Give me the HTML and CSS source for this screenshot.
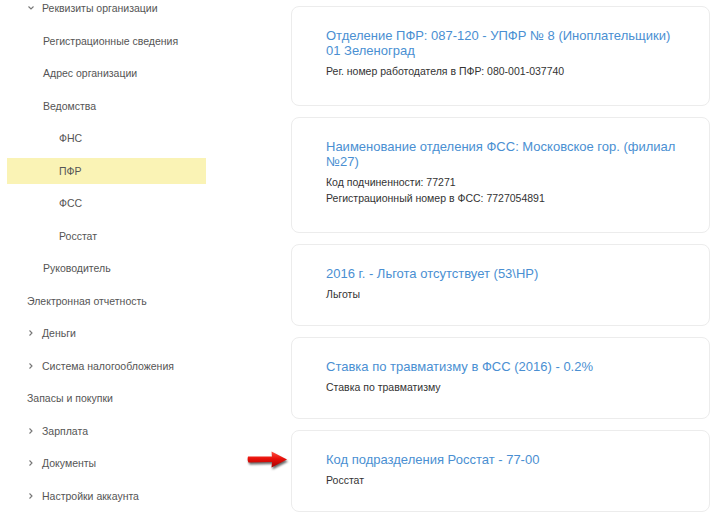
FILE: index.html
```html
<!DOCTYPE html>
<html lang="ru">
<head>
    <meta charset="UTF-8">
    <title>Реквизиты организации</title>
    <link rel="stylesheet" href="styles.css">
</head>
<body>
    <div class="page">
        <ul class="nav">
            <li class="nav-item lvl-0 has-toggle"><span class="toggle"><svg width="8" height="6" viewBox="0 0 8 6"><path d="M1.5 1.5 L4 4 L6.5 1.5" fill="none" stroke="#777" stroke-width="1.1"/></svg></span>Реквизиты организации</li>
            <li class="nav-item lvl-1">Регистрационные сведения</li>
            <li class="nav-item lvl-1">Адрес организации</li>
            <li class="nav-item lvl-1">Ведомства</li>
            <li class="nav-item lvl-2">ФНС</li>
            <li class="nav-item lvl-2 active">ПФР</li>
            <li class="nav-item lvl-2">ФСС</li>
            <li class="nav-item lvl-2">Росстат</li>
            <li class="nav-item lvl-1">Руководитель</li>
            <li class="nav-item lvl-0">Электронная отчетность</li>
            <li class="nav-item lvl-0 has-toggle"><span class="toggle"><svg width="8" height="8" viewBox="0 0 8 8"><path d="M2.5 1.5 L5 4 L2.5 6.5" fill="none" stroke="#777" stroke-width="1.1"/></svg></span>Деньги</li>
            <li class="nav-item lvl-0 has-toggle"><span class="toggle"><svg width="8" height="8" viewBox="0 0 8 8"><path d="M2.5 1.5 L5 4 L2.5 6.5" fill="none" stroke="#777" stroke-width="1.1"/></svg></span>Система налогообложения</li>
            <li class="nav-item lvl-0">Запасы и покупки</li>
            <li class="nav-item lvl-0 has-toggle"><span class="toggle"><svg width="8" height="8" viewBox="0 0 8 8"><path d="M2.5 1.5 L5 4 L2.5 6.5" fill="none" stroke="#777" stroke-width="1.1"/></svg></span>Зарплата</li>
            <li class="nav-item lvl-0 has-toggle"><span class="toggle"><svg width="8" height="8" viewBox="0 0 8 8"><path d="M2.5 1.5 L5 4 L2.5 6.5" fill="none" stroke="#777" stroke-width="1.1"/></svg></span>Документы</li>
            <li class="nav-item lvl-0 has-toggle"><span class="toggle"><svg width="8" height="8" viewBox="0 0 8 8"><path d="M2.5 1.5 L5 4 L2.5 6.5" fill="none" stroke="#777" stroke-width="1.1"/></svg></span>Настройки аккаунта</li>
        </ul>

        <div class="cards">
            <div class="card card-tall">
                <div class="card-title">Отделение ПФР: 087-120 - УПФР № 8 (Иноплательщики) 01 Зеленоград</div>
                <div class="card-text">Рег. номер работодателя в ПФР: 080-001-037740</div>
            </div>
            <div class="card card-tall">
                <div class="card-title">Наименование отделения ФСС: Московское гор. (филиал №27)</div>
                <div class="card-text">Код подчиненности: 77271</div>
                <div class="card-text">Регистрационный номер в ФСС: 7727054891</div>
            </div>
            <div class="card">
                <div class="card-title">2016 г. - Льгота отсутствует (53\НР)</div>
                <div class="card-text">Льготы</div>
            </div>
            <div class="card">
                <div class="card-title">Ставка по травматизму в ФСС (2016) - 0.2%</div>
                <div class="card-text">Ставка по травматизму</div>
            </div>
            <div class="card">
                <!-- стрелка-указатель -->
                <svg class="pointer" width="44" height="20" viewBox="0 0 44 20">
                    <defs>
                        <linearGradient id="red" x1="0" y1="0" x2="0" y2="1">
                            <stop offset="0" stop-color="#ff5040"/>
                            <stop offset="0.45" stop-color="#e8100a"/>
                            <stop offset="1" stop-color="#a80000"/>
                        </linearGradient>
                    </defs>
                    <path d="M1 6.5 Q0 10 1.5 12.5 L25 12 L24.5 17.5 L40 9.5 L24.5 1.5 L25 6.5 Z" fill="url(#red)"/>
                </svg>
                <div class="card-title">Код подразделения Росстат - 77-00</div>
                <div class="card-text">Росстат</div>
            </div>
        </div>
    </div>
</body>
</html>
```

FILE: styles.css
```css
*{
    margin: 0;
    padding: 0;
    box-sizing: border-box;
}
body{
    background-color: #fff;
    font-family: "Liberation Sans", Arial, sans-serif;
    overflow: hidden;
}
.page{
    display: flex;
    align-items: flex-start;
    padding-left: 7px;
}

/* левое меню */
.nav{
    list-style: none;
    width: 199px;
    margin-top: -5px;
}
.nav-item{
    display: flex;
    align-items: center;
    height: 26px;
    margin-bottom: 6.5px;
    font-size: 10.5px;
    color: #555;
}
.nav-item.active{
    background-color: #faf3b5;
}
.lvl-0{
    padding-left: 20px;
}
.lvl-1{
    padding-left: 36px;
}
.lvl-2{
    padding-left: 52px;
}
.toggle{
    display: flex;
    align-items: center;
    justify-content: center;
    width: 8px;
    height: 8px;
    margin-right: 7px;
}

/* карточки */
.cards{
    display: flex;
    flex-direction: column;
    gap: 11px;
    width: 419px;
    margin-left: 85px;
    margin-top: 6px;
}
.card{
    position: relative;
    padding: 21px 27px 23px 34px;
    background-color: #fff;
    border: 1px solid #ececec;
    border-radius: 8px;
}
.card-tall{
    padding-bottom: 26px;
}
.card-title{
    font-size: 13px;
    line-height: 15px;
    color: #4a8fd2;
    margin-bottom: 5px;
}
.card-text{
    font-size: 10.5px;
    line-height: 16px;
    color: #333;
}
.pointer{
    position: absolute;
    left: -45px;
    top: 19px;
    filter: drop-shadow(1px 2px 1px rgba(0, 0, 0, 0.6));
}
```
